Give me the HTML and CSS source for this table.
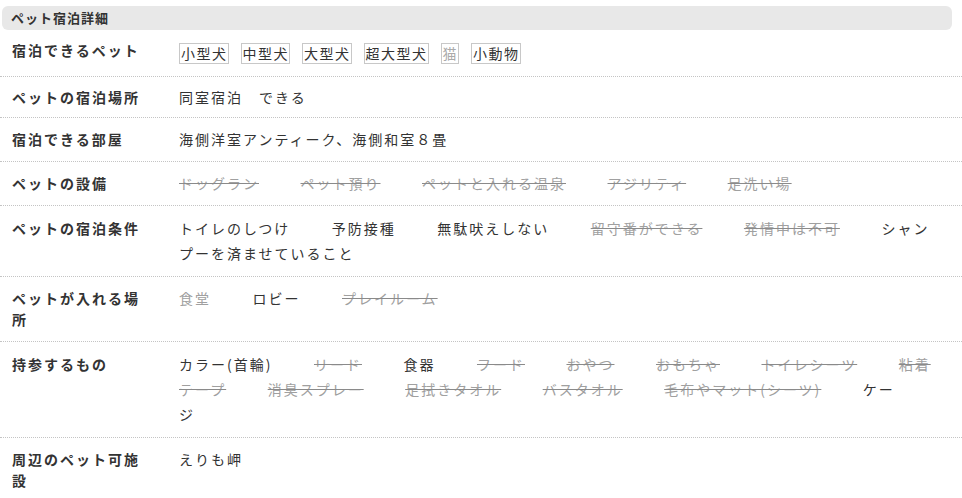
FILE: index.html
```html
<!DOCTYPE html>
<html lang="ja">
<head>
<meta charset="utf-8">
<title>ペット宿泊詳細</title>
<link rel="stylesheet" href="styles.css">
</head>
<body>
<section class="pet">
  <h2 class="pet-title">ペット宿泊詳細</h2>
  <dl class="pet-list">
    <div class="row row--tags">
      <dt class="label">宿泊できるペット</dt>
      <dd class="value">
        <span class="tag">小型犬</span><span class="tag">中型犬</span><span class="tag">大型犬</span><span class="tag">超大型犬</span><span class="tag tag--off">猫</span><span class="tag">小動物</span>
      </dd>
    </div>
    <div class="row row--short">
      <dt class="label">ペットの宿泊場所</dt>
      <dd class="value">同室宿泊　できる</dd>
    </div>
    <div class="row">
      <dt class="label">宿泊できる部屋</dt>
      <dd class="value">海側洋室アンティーク、海側和室８畳</dd>
    </div>
    <div class="row">
      <dt class="label">ペットの設備</dt>
      <dd class="value"><span class="item item--no">ドッグラン</span><span class="item item--no">ペット預り</span><span class="item item--no">ペットと入れる温泉</span><span class="item item--no">アジリティ</span><span class="item item--no">足洗い場</span></dd>
    </div>
    <div class="row row--tall">
      <dt class="label">ペットの宿泊条件</dt>
      <dd class="value"><span class="item">トイレのしつけ</span><span class="item">予防接種</span><span class="item">無駄吠えしない</span><span class="item item--no">留守番ができる</span><span class="item item--no">発情中は不可</span><span class="item">シャンプーを済ませていること</span></dd>
    </div>
    <div class="row">
      <dt class="label">ペットが入れる場所</dt>
      <dd class="value"><span class="item item--dim">食堂</span><span class="item">ロビー</span><span class="item item--no">プレイルーム</span></dd>
    </div>
    <div class="row row--tall">
      <dt class="label">持参するもの</dt>
      <dd class="value"><span class="item">カラー(首輪)</span><span class="item item--no">リード</span><span class="item">食器</span><span class="item item--no">フード</span><span class="item item--no">おやつ</span><span class="item item--no">おもちゃ</span><span class="item item--no">トイレシーツ</span><span class="item item--no">粘着テープ</span><span class="item item--no">消臭スプレー</span><span class="item item--no">足拭きタオル</span><span class="item item--no">バスタオル</span><span class="item item--no">毛布やマット(シーツ)</span><span class="item">ケージ</span></dd>
    </div>
    <div class="row">
      <dt class="label">周辺のペット可施設</dt>
      <dd class="value">えりも岬</dd>
    </div>
  </dl>
</section>
</body>
</html>
```

FILE: styles.css
```css
* { box-sizing: border-box; }
html, body { margin: 0; padding: 0; background: #fff; }
body {
  font-family: "Noto Sans CJK JP", "Noto Sans", sans-serif;
  color: #333;
  font-size: 14px;
}
.pet { padding-top: 6px; width: 962px; }
.pet-title {
  margin: 0 10px 0 2px;
  height: 24px;
  line-height: 24px;
  padding-left: 9px;
  background: #e8e8e8;
  border-radius: 6px;
  font-size: 13px;
  font-weight: 700;
  letter-spacing: 1px;
  color: #333;
}
.pet-list { margin: 0; }
.row {
  display: grid;
  grid-template-columns: 179px 1fr;
  align-items: start;
  padding: 11px 0;
  border-bottom: 1px dotted #c4c4c4;
}
.row:last-child { border-bottom: none; }
.row--short { padding: 10px 0 9px; }
.row--tall { padding: 12px 0 12px; }
.label {
  margin: 0;
  padding: 0 37px 0 12px;
  font-weight: 700;
  line-height: 21px;
  letter-spacing: 2px;
  color: #333;
}
.value {
  margin: -2px 0;
  padding-right: 20px;
  line-height: 25px;
  letter-spacing: 2px;
  color: #333;
}
.row--tags { padding: 10px 0 12px; }
.row--tags .value { margin: 3px 0 0; line-height: 21px; }
.tag {
  display: inline-block;
  vertical-align: top;
  border: 1px solid #c8c8c8;
  line-height: 19px;
  padding: 0 0 0 1px;
  margin-right: 12px;
  letter-spacing: 1.5px;
  color: #333;
}
.tag--off { color: #aaa; }
.item { margin-right: 41.5px; }
.item--no { color: #a0a0a0; text-decoration: line-through; text-decoration-color: #8a8a8a; }
.item--dim { color: #a0a0a0; }
```
